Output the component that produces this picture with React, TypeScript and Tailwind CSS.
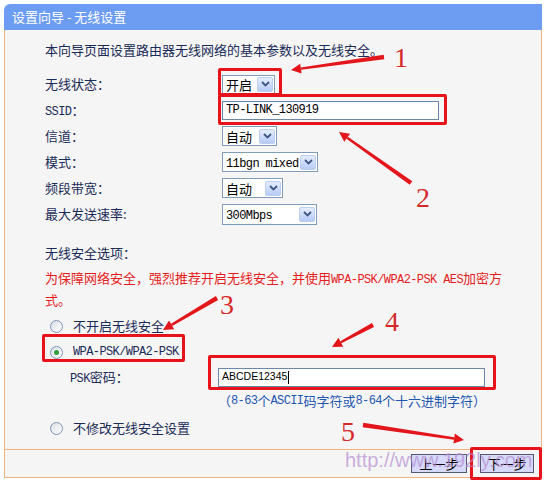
import React from "react";

const mono = "font-['Liberation_Mono',monospace] text-[12px] tracking-[-0.6px]";

function Chevron() {
  return (
    <svg width="9" height="6" viewBox="0 0 9 6">
      <path d="M1 1L4.5 4.5L8 1" fill="none" stroke="#3f5685" strokeWidth="1.8" />
    </svg>
  );
}

function DropArrow() {
  return (
    <span className="flex h-[15px] w-[16px] items-center justify-center rounded-[2px] border border-[#bccdf0] bg-linear-to-b from-[#e6edfd] to-[#b6cbf5]">
      <Chevron />
    </span>
  );
}

function Select({ w, h, children }: { w: string; h: string; children: React.ReactNode }) {
  return (
    <div className={`flex items-center justify-between border border-[#7f9db9] bg-white pl-[3px] pr-[1px] ${w} ${h}`}>
      <span className="leading-none text-black">{children}</span>
      <DropArrow />
    </div>
  );
}

function Radio({ checked }: { checked?: boolean }) {
  return (
    <span className="flex h-[13px] w-[13px] items-center justify-center rounded-full border border-[#7e93b5] bg-linear-to-br from-[#d9dfe8] to-white">
      {checked && <span className="h-[5px] w-[5px] rounded-full bg-[#2f9e3a]" />}
    </span>
  );
}

function Row({ label, children }: { label: React.ReactNode; children: React.ReactNode }) {
  return (
    <div className="flex h-[26px] items-center">
      <div className="w-[177px]">{label}</div>
      {children}
    </div>
  );
}

const arrows: [number, number, number, number][] = [
  [384, 57, 291, 70],
  [411, 183, 339, 132],
  [217, 298, 163, 330],
  [373, 325, 332, 347],
  [363, 425, 464, 440],
];

function Arrow({ a }: { a: [number, number, number, number] }) {
  const [x1, y1, x2, y2] = a;
  const dx = x2 - x1;
  const dy = y2 - y1;
  const L = Math.hypot(dx, dy);
  const ux = dx / L;
  const uy = dy / L;
  const nx = -uy;
  const ny = ux;
  const hl = 10;
  const hw = 5;
  const bx = x2 - ux * hl;
  const by = y2 - uy * hl;
  const tw = 2.2;
  const bw = 1.2;
  const shaft = [
    [x1 + nx * tw, y1 + ny * tw],
    [bx + nx * bw, by + ny * bw],
    [bx - nx * bw, by - ny * bw],
    [x1 - nx * tw, y1 - ny * tw],
  ]
    .map((p) => p.join(","))
    .join(" ");
  const head = [
    [x2, y2],
    [bx + nx * hw, by + ny * hw],
    [bx - nx * hw, by - ny * hw],
  ]
    .map((p) => p.join(","))
    .join(" ");
  return (
    <g fill="#e3161c">
      <polygon points={shaft} />
      <polygon points={head} />
    </g>
  );
}

export default function App() {
  return (
    <div className="relative h-[481px] w-[548px] overflow-hidden bg-white font-['Noto_Sans_CJK_SC',sans-serif] text-[13px] text-[#1b2b57]">
      <div className="ml-[4px] mt-[4px] w-[538px]">
        <div className="flex h-[26px] items-center rounded-tl-[6px] bg-[#6c9df2] pl-[8px] text-[13px] text-white">
          设置向导 - 无线设置
        </div>
        <div className="h-[419px] border-x border-[#f0b47a] bg-[#f5f5f5] pl-[40px] pt-[10px]">
          <div className="flex h-[20px] items-center">本向导页面设置路由器无线网络的基本参数以及无线安全。</div>
          <div className="mt-[11px] flex flex-col">
            <Row label="无线状态：">
              <Select w="w-[53px]" h="h-[19px]">开启</Select>
            </Row>
            <Row
              label={
                <span>
                  <span className={mono}>SSID</span>：
                </span>
              }
            >
              <div className={`flex h-[19px] w-[217px] items-center border border-[#6d87a8] bg-white pl-[3px] text-black ${mono}`}>
                TP-LINK_130919
              </div>
            </Row>
            <Row label="信道：">
              <Select w="w-[55px]" h="h-[20px]">自动</Select>
            </Row>
            <Row label="模式：">
              <Select w="w-[96px]" h="h-[20px]">
                <span className={mono}>11bgn mixed</span>
              </Select>
            </Row>
            <Row label="频段带宽：">
              <Select w="w-[61px]" h="h-[20px]">自动</Select>
            </Row>
            <Row label="最大发送速率:">
              <Select w="w-[95px]" h="h-[21px]">
                <span className={mono}>300Mbps</span>
              </Select>
            </Row>
          </div>
          <div className="mt-[16px] flex h-[20px] items-center">无线安全选项：</div>
          <div className="mt-[5px] leading-[20px] text-[#e51c1c]">
            为保障网络安全，强烈推荐开启无线安全，并使用<span className={mono}>WPA-PSK/WPA2-PSK AES</span>加密方
            <br />
            式。
          </div>
          <div className="mt-[3px] flex h-[26px] items-center">
            <span className="ml-[5px]">
              <Radio />
            </span>
            <span className="ml-[10px]">不开启无线安全</span>
          </div>
          <div className="flex h-[26px] items-center">
            <span className="ml-[5px]">
              <Radio checked />
            </span>
            <span className={`ml-[10px] ${mono}`}>WPA-PSK/WPA2-PSK</span>
          </div>
          <div className="flex h-[24px] items-center">
            <div className="ml-[25px] w-[148px]">
              <span className={mono}>PSK</span>密码：
            </div>
            <div className="flex h-[19px] w-[267px] items-center border border-[#6d87a8] bg-white pl-[3px] font-['Liberation_Sans',Arial,sans-serif] text-[10.5px] text-black">
              ABCDE12345
              <span className="ml-[1px] h-[13px] w-px bg-black" />
            </div>
          </div>
          <div className="ml-[173px] flex h-[24px] items-center text-[#1f56b0]">
            （<span className={mono}>8-63</span>个<span className={mono}>ASCII</span>码字符或<span className={mono}>8-64</span>个十六进制字符）
          </div>
          <div className="mt-[2px] flex h-[26px] items-center">
            <span className="ml-[5px]">
              <Radio />
            </span>
            <span className="ml-[10px]">不修改无线安全设置</span>
          </div>
        </div>
        <div className="flex h-[29px] items-center justify-end gap-[13px] border border-[#f0b47a] bg-[#f5f5f5] pr-[7px] text-black">
          <div className="flex h-[19px] w-[56px] items-center justify-center border border-[#55576e] bg-[#d6d9f9] leading-none">上一步</div>
          <div className="flex h-[19px] w-[54px] items-center justify-center border border-[#55576e] bg-[#d6d9f9] leading-none">下一步</div>
        </div>
      </div>

      {/* annotation boxes */}
      <div className="pointer-events-none absolute left-[218px] top-[68px] h-[28px] w-[64px] rounded-[2px] border-[3px] border-[#e8121a]" />
      <div className="pointer-events-none absolute left-[218px] top-[94px] h-[31px] w-[229px] rounded-[2px] border-[3px] border-[#e8121a]" />
      <div className="pointer-events-none absolute left-[42px] top-[334px] h-[28px] w-[143px] rounded-[2px] border-[3px] border-[#e8121a]" />
      <div className="pointer-events-none absolute left-[208px] top-[355px] h-[35px] w-[288px] rounded-[2px] border-[3px] border-[#e8121a]" />
      <div className="pointer-events-none absolute left-[470px] top-[447px] h-[33px] w-[72px] rounded-[2px] border-[3px] border-[#e8121a]" />

      <svg className="pointer-events-none absolute left-0 top-0" width="548" height="481">
        {arrows.map((a, i) => (
          <Arrow key={i} a={a} />
        ))}
      </svg>

      {/* annotation numbers */}
      <div className="absolute left-[394px] top-[44px] font-['Liberation_Serif',serif] text-[28px] leading-[28px] text-[#d42a2a]">1</div>
      <div className="absolute left-[416px] top-[184px] font-['Liberation_Serif',serif] text-[28px] leading-[28px] text-[#d42a2a]">2</div>
      <div className="absolute left-[220px] top-[291px] font-['Liberation_Serif',serif] text-[28px] leading-[28px] text-[#d42a2a]">3</div>
      <div className="absolute left-[385px] top-[308px] font-['Liberation_Serif',serif] text-[28px] leading-[28px] text-[#d42a2a]">4</div>
      <div className="absolute left-[341px] top-[418px] font-['Liberation_Serif',serif] text-[28px] leading-[28px] text-[#d42a2a]">5</div>

      <div className="pointer-events-none absolute left-[345px] top-[450px] font-['Liberation_Sans',Arial,sans-serif] text-[20px] leading-[20px] text-[#b48ccf]/70">
        http://www.192ly.com
      </div>
    </div>
  );
}
